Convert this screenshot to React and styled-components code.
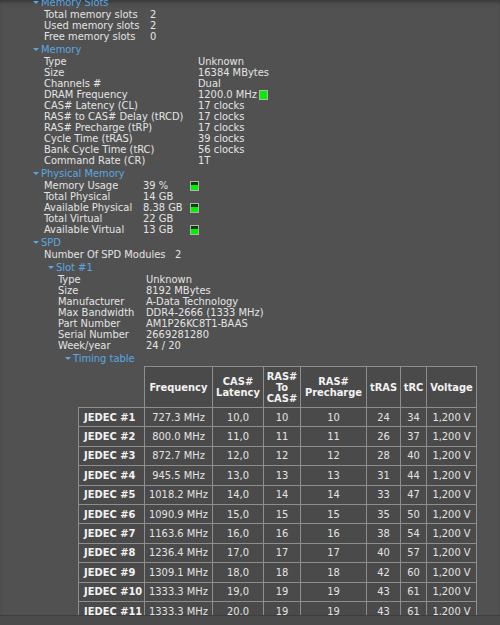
import styled, { createGlobalStyle } from 'styled-components';

const GlobalStyle = createGlobalStyle`
html, body {
  margin: 0;
  padding: 0;
  background: #515151;
}
body {
  font-family: "DejaVu Sans Condensed", "DejaVu Sans", Tahoma, sans-serif;
  font-stretch: condensed;
  font-size: 11px;
  color: #e4e4e4;
}
`;

const memorySlots = [
  ['Total memory slots', '2'],
  ['Used memory slots', '2'],
  ['Free memory slots', '0'],
];

const memory = [
  ['Type', 'Unknown'],
  ['Size', '16384 MBytes'],
  ['Channels #', 'Dual'],
  ['DRAM Frequency', '1200.0 MHz', 0],
  ['CAS# Latency (CL)', '17 clocks'],
  ['RAS# to CAS# Delay (tRCD)', '17 clocks'],
  ['RAS# Precharge (tRP)', '17 clocks'],
  ['Cycle Time (tRAS)', '39 clocks'],
  ['Bank Cycle Time (tRC)', '56 clocks'],
  ['Command Rate (CR)', '1T'],
];

const physical = [
  ['Memory Usage', '39 %', 39],
  ['Total Physical', '14 GB'],
  ['Available Physical', '8.38 GB', 38],
  ['Total Virtual', '22 GB'],
  ['Available Virtual', '13 GB', 36],
];

const slot = [
  ['Type', 'Unknown'],
  ['Size', '8192 MBytes'],
  ['Manufacturer', 'A-Data Technology'],
  ['Max Bandwidth', 'DDR4-2666 (1333 MHz)'],
  ['Part Number', 'AM1P26KC8T1-BAAS'],
  ['Serial Number', '2669281280'],
  ['Week/year', '24 / 20'],
];

const timings = [
  ['727.3', '10,0', 10, 10, 24, 34],
  ['800.0', '11,0', 11, 11, 26, 37],
  ['872.7', '12,0', 12, 12, 28, 40],
  ['945.5', '13,0', 13, 13, 31, 44],
  ['1018.2', '14,0', 14, 14, 33, 47],
  ['1090.9', '15,0', 15, 15, 35, 50],
  ['1163.6', '16,0', 16, 16, 38, 54],
  ['1236.4', '17,0', 17, 17, 40, 57],
  ['1309.1', '18,0', 18, 18, 42, 60],
  ['1333.3', '19,0', 19, 19, 43, 61],
  ['1333.3', '20,0', 19, 19, 43, 61],
];

const colWidths = [66, 68, 51, 37, 66, 34, 26, 50];

function Section({ title, indent, children }) {
  return (
    <div>
      <Header $indent={indent}>
        <Caret />
        {title}
      </Header>
      {children}
    </div>
  );
}

function Rows({ items, indent, label, value }) {
  return items.map(([name, val, level]) => (
    <Row key={name} $indent={indent} $label={label} $value={value}>
      <span>{name}</span>
      {value ? (
        <>
          <span>{val}</span>
          {level !== undefined && <Gauge $level={level} />}
        </>
      ) : (
        <Value>
          {val}
          {level !== undefined && <Gauge $level={level} />}
        </Value>
      )}
    </Row>
  ));
}

export default function App() {
  return (
    <Page>
      <GlobalStyle />
      <Viewport>
        <Content>
          <Section title="Memory Slots" indent={33}>
            <Rows items={memorySlots} indent={44} label={106} />
          </Section>
          <Section title="Memory" indent={33}>
            <Rows items={memory} indent={44} label={154} />
          </Section>
          <Section title="Physical Memory" indent={33}>
            <Rows items={physical} indent={44} label={99} value={47} />
          </Section>
          <Section title="SPD" indent={33}>
            <Rows items={[['Number Of SPD Modules', '2']]} indent={44} label={131} />
            <Section title="Slot #1" indent={48}>
              <Rows items={slot} indent={58} label={88} />
              <Section title="Timing table" indent={65}>
                <Table>
                  <colgroup>
                    {colWidths.map((w, i) => (
                      <col key={i} style={{ width: w }} />
                    ))}
                  </colgroup>
                  <thead>
                    <tr>
                      <Corner />
                      <Th>Frequency</Th>
                      <Th>CAS#<br />Latency</Th>
                      <Th>RAS#<br />To<br />CAS#</Th>
                      <Th>RAS#<br />Precharge</Th>
                      <Th>tRAS</Th>
                      <Th>tRC</Th>
                      <Th>Voltage</Th>
                    </tr>
                  </thead>
                  <tbody>
                    {timings.map((t, i) => (
                      <tr key={i}>
                        <RowHead>JEDEC #{i + 1}</RowHead>
                        <Td>{t[0]} MHz</Td>
                        <Td>{t[1]}</Td>
                        <Td>{t[2]}</Td>
                        <Td>{t[3]}</Td>
                        <Td>{t[4]}</Td>
                        <Td>{t[5]}</Td>
                        <Td>1,200 V</Td>
                      </tr>
                    ))}
                  </tbody>
                </Table>
              </Section>
            </Section>
          </Section>
        </Content>
      </Viewport>
      <StatusBar />
    </Page>
  );
}

const Page = styled.div`
height: 625px;
display: flex;
flex-direction: column;
overflow: hidden;
background: #515151;
`;

const Viewport = styled.div`
flex: 1;
overflow: hidden;
box-shadow: inset 0 4px 4px -2px rgba(0, 0, 0, 0.35);
`;

const Content = styled.div`
margin-top: -5px;
`;

const Header = styled.div`
display: flex;
align-items: center;
height: 14px;
padding-left: ${p => p.$indent}px;
color: #5aa8e0;
white-space: nowrap;
`;

const Caret = styled.span`
width: 0;
height: 0;
border-left: 3px solid transparent;
border-right: 3px solid transparent;
border-top: 3px solid #5aa8e0;
margin-right: 2px;
`;

const Row = styled.div`
display: grid;
grid-template-columns: ${p => p.$label}px ${p => (p.$value ? `${p.$value}px auto` : 'auto')};
justify-content: start;
align-items: center;
height: 11px;
line-height: 11px;
padding-left: ${p => p.$indent}px;
white-space: nowrap;
`;

const Value = styled.span`
display: flex;
align-items: center;
gap: 2px;
`;

const Gauge = styled.span`
display: block;
width: 7px;
height: 8px;
border: 1px solid #b4b4b4;
background: linear-gradient(#0b3d0b 0 ${p => p.$level}%, #00f000 ${p => p.$level}% 100%);
`;

const Table = styled.table`
margin: 1px 0 0 78px;
border-collapse: collapse;
table-layout: fixed;
width: 398px;
`;

const Corner = styled.th`
border: none;
`;

const Th = styled.th`
height: 40px;
padding: 0;
border: 1px solid #8e8e8e;
background: #4a4a4a;
color: #f2f2f2;
font-weight: bold;
line-height: 11px;
text-align: center;
`;

const Td = styled.td`
height: 18.4px;
padding: 0;
border: 1px solid #8e8e8e;
background: #4a4a4a;
text-align: center;
white-space: nowrap;
`;

const RowHead = styled(Td)`
padding-left: 5px;
text-align: left;
font-weight: bold;
color: #f2f2f2;
`;

const StatusBar = styled.div`
height: 9px;
flex-shrink: 0;
border-top: 1px solid #3e3e3e;
background: #4b4b4b;
`;
